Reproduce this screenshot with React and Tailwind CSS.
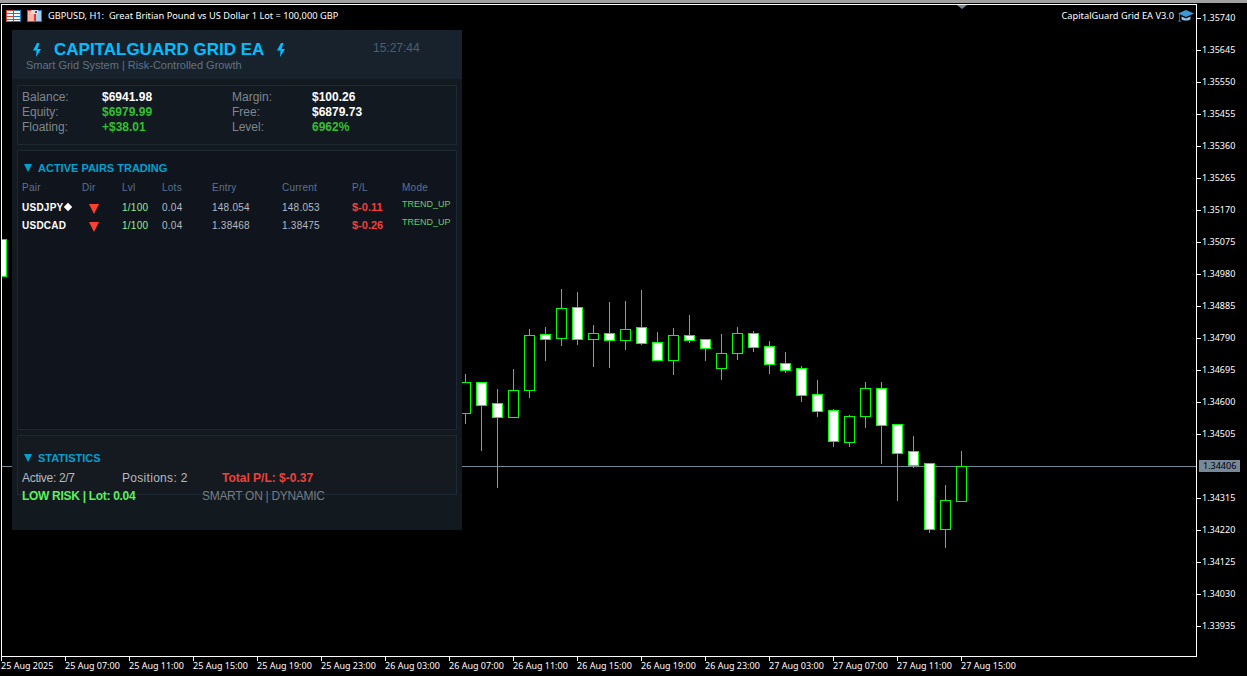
import React from "react";

const candles = [
  [465, 374, 424, 382, 413, 0], [481, 382, 451, 382, 405, 1], [497, 389, 488, 403, 417, 1], [513, 369, 418, 390, 417, 0],
  [529, 329, 398, 335, 390, 0], [545, 327, 361, 334, 339, 1], [561, 289, 346, 308, 338, 0], [577, 292, 345, 307, 339, 1],
  [593, 325, 367, 333, 339, 0], [609, 302, 368, 333, 340, 1], [625, 301, 350, 329, 340, 0], [641, 290, 345, 327, 343, 1],
  [657, 332, 360, 342, 360, 1], [673, 328, 375, 335, 360, 0], [689, 315, 343, 335, 340, 1], [705, 339, 361, 339, 348, 1],
  [721, 334, 380, 353, 368, 0], [737, 327, 360, 333, 353, 0], [753, 331, 352, 333, 347, 1], [769, 341, 374, 346, 364, 1],
  [785, 352, 373, 363, 370, 1], [801, 366, 402, 368, 395, 1], [817, 380, 417, 394, 411, 1], [833, 409, 447, 410, 441, 1],
  [849, 415, 447, 416, 442, 0], [865, 382, 428, 388, 416, 0], [881, 382, 464, 388, 425, 1], [897, 424, 501, 424, 453, 1],
  [913, 436, 468, 451, 465, 1], [929, 463, 533, 463, 529, 1], [945, 485, 548, 500, 529, 0], [961, 451, 501, 466, 501, 0],
];

const prices = [
  "1.35740", "1.35645", "1.35550", "1.35455", "1.35360", "1.35265", "1.35170", "1.35075", "1.34980", "1.34885",
  "1.34790", "1.34695", "1.34600", "1.34505", "1.34406", "1.34315", "1.34220", "1.34125", "1.34030", "1.33935",
];

const times = [
  "25 Aug 2025", "25 Aug 07:00", "25 Aug 11:00", "25 Aug 15:00", "25 Aug 19:00", "25 Aug 23:00", "26 Aug 03:00", "26 Aug 07:00",
  "26 Aug 11:00", "26 Aug 15:00", "26 Aug 19:00", "26 Aug 23:00", "27 Aug 03:00", "27 Aug 07:00", "27 Aug 11:00", "27 Aug 15:00",
];

const pairs = [
  { name: "USDJPY", mark: true, entry: "148.054", current: "148.053", pl: "$-0.11" },
  { name: "USDCAD", mark: false, entry: "1.38468", current: "1.38475", pl: "$-0.26" },
];

function Chart() {
  return (
    <svg className="absolute inset-0 h-full w-full" viewBox="2 5 1194 651" shapeRendering="crispEdges">
      <rect x="-3.5" y="239.5" width="10" height="37" fill="#fff" stroke="#00ff00" />
      <line x1="0" x2="1196" y1="466.5" y2="466.5" stroke="#778899" />
      {candles.map(([x, high, low, top, bottom, filled]) => (
        <g key={x}>
          <line x1={x + 0.5} x2={x + 0.5} y1={high} y2={low} stroke="#00ff00" />
          <rect x={x - 4.5} y={top + 0.5} width="10" height={bottom - top} fill={filled ? "#fff" : "#000"} stroke="#00ff00" />
        </g>
      ))}
    </svg>
  );
}

function Bolt() {
  return (
    <svg className="h-3.5 w-2.5" viewBox="0 0 10 14" fill="#00bfff">
      <path d="M5 0 1 7.500h3.500L4 14l5-8H5.500L7.500 0z" />
    </svg>
  );
}

function Down({ className }) {
  return (
    <svg className={className} viewBox="0 0 10 10" fill="currentColor" preserveAspectRatio="none">
      <path d="M0 0h10L5 10z" />
    </svg>
  );
}

function TableIcon() {
  return (
    <svg className="h-3 w-[15px]" viewBox="0 0 15 12" shapeRendering="crispEdges">
      <rect x="0.500" y="0.500" width="14" height="11" fill="#fff" stroke="#e0402c" />
      <path d="M7.500 0.500h7v11h-7z" fill="#fff" stroke="#1e78c8" />
      <path d="M1 3.500h6M1 6.500h6M1 9.500h6" stroke="#e0402c" />
      <path d="M8 3.500h6M8 6.500h6M8 9.500h6" stroke="#1e78c8" />
    </svg>
  );
}

function DiskIcon() {
  return (
    <svg className="h-3 w-[15px]" viewBox="0 0 15 12" shapeRendering="crispEdges">
      <path d="M0.500 0.500h6.500v11h-6.500z" fill="#ffb4a8" stroke="#e0402c" />
      <path d="M8 0.500h6.500v11h-6.500z" fill="#a8d0f0" stroke="#1e78c8" />
      <rect x="4" y="0" width="7" height="4" fill="#ddd" />
      <rect x="8" y="1" width="2" height="2" fill="#555" />
    </svg>
  );
}

function CapIcon() {
  return (
    <svg className="h-3.5 w-4" viewBox="0 0 16 14" fill="#3d9ad8">
      <path d="M8 1 0 4.500 8 8l8-3.500z" />
      <path d="M3.500 7.500v2.800C5 12 11 12 12.500 10.300V7.500L8 9.500z" fill="#8cc4ec" />
      <path d="M1 5h1v6H1zM0.500 11h2v2h-2z" fill="#1e6fb0" />
    </svg>
  );
}

function Panel() {
  return (
    <div className="absolute left-2.5 top-[25px] h-[500px] w-[450px] bg-[#12191f] font-['Liberation_Sans',sans-serif]">
      <div className="relative border-b border-[#18222c] bg-[#18222c] pl-3.5 pb-1.5 pt-3">
        <div className="flex h-4 items-center gap-3 pl-1.5">
          <Bolt />
          <span className="text-[17px] font-bold leading-4 text-[#00bfff]">CAPITALGUARD GRID EA</span>
          <Bolt />
        </div>
        <p className="text-[11px] leading-3.5 text-[#5f7282]">Smart Grid System | Risk-Controlled Growth</p>
        <span className="absolute left-[361px] top-2.5 text-xs leading-4 text-[#4d5f6e]">15:27:44</span>
      </div>

      <div className="flex flex-col gap-[5px] px-[5px] pt-1.5">
        <div className="grid h-15 grid-cols-[5rem_130px_5rem_1fr] content-start border border-[#1d2833] bg-[#121920] px-1 pt-1 text-xs leading-tight text-[#7e8790]">
          <span>Balance:</span>
          <span className="font-bold text-white">$6941.98</span>
          <span>Margin:</span>
          <span className="font-bold text-white">$100.26</span>
          <span>Equity:</span>
          <span className="font-bold text-[#32c032]">$6979.99</span>
          <span>Free:</span>
          <span className="font-bold text-white">$6879.73</span>
          <span>Floating:</span>
          <span className="font-bold text-[#32c032]">+$38.01</span>
          <span>Level:</span>
          <span className="font-bold text-[#32c032]">6962%</span>
        </div>

        <div className="h-70 border border-[#1d2833] bg-[#10151d] px-1 pt-2">
          <div className="flex h-4.5 items-center gap-1.5 text-[11px] font-bold text-[#00a0d0]">
            <Down className="ml-0.5 h-2 w-2" />
            ACTIVE PAIRS TRADING
          </div>
          <div className="mt-0.5 grid h-4 grid-cols-[60px_40px_40px_50px_70px_70px_50px_1fr] items-center text-[10px] tracking-wide text-[#5b7290]">
            <span>Pair</span>
            <span>Dir</span>
            <span>Lvl</span>
            <span>Lots</span>
            <span>Entry</span>
            <span>Current</span>
            <span>P/L</span>
            <span>Mode</span>
          </div>
          <div className="mt-0.75">
            {pairs.map((p) => (
              <div key={p.name} className="grid h-4.5 grid-cols-[60px_40px_40px_50px_70px_70px_50px_1fr] items-center text-[10px] tracking-wide text-[#b4bac0]">
                <span className="flex items-center gap-px font-bold text-white">
                  {p.name}
                  {p.mark && <span className="size-1.5 rotate-45 bg-white" />}
                </span>
                <Down className="ml-[7px] mt-1 h-2.5 w-2.5 text-[#ff4030]" />
                <span className="text-[#90ee90]">1/100</span>
                <span>0.04</span>
                <span>{p.entry}</span>
                <span>{p.current}</span>
                <span className="text-[11px] font-bold tracking-normal text-[#f04038]">{p.pl}</span>
                <span className="-mt-1 text-[9px] tracking-normal text-[#66cc66]">TREND_UP</span>
              </div>
            ))}
          </div>
        </div>

        <div className="h-15 border border-[#1d2833] bg-[#141a20] px-1 pt-3.5">
          <div className="flex h-4 items-center gap-1.5 text-[11px] font-bold text-[#00a0d0]">
            <Down className="ml-0.5 h-2 w-2" />
            STATISTICS
          </div>
          <div className="mt-1 grid h-4 grid-cols-[100px_100px_1fr] items-center text-xs text-[#b4bac0]">
            <span className="tracking-tight">Active: 2/7</span>
            <span className="tracking-wide">Positions: 2</span>
            <span className="font-bold text-[#f04038]">Total P/L: $-0.37</span>
          </div>
          <div className="mt-0.5 grid h-4 grid-cols-[180px_1fr] items-center text-xs tracking-tight">
            <span className="font-bold text-[#5cf05c]">LOW RISK | Lot: 0.04</span>
            <span className="text-[#777c82]">SMART ON | DYNAMIC</span>
          </div>
        </div>
      </div>
    </div>
  );
}

export default function App() {
  return (
    <div className="flex h-screen w-screen flex-col overflow-hidden bg-black font-['Noto_Sans',sans-serif] text-[9px] text-white">
      <div className="relative z-10 h-1 bg-black">
        <div className="h-[3px] bg-[#a0a0a0]" />
      </div>

      <div className="flex pl-px">
        <div className="relative h-[653px] w-[1196px] border border-white">
          <Chart />
          <div className="relative flex justify-between pl-1 pr-0.5 pt-1 text-[9.25px]">
            <div className="flex items-center gap-1.5">
              <TableIcon />
              <DiskIcon />
              <span>GBPUSD, H1:&nbsp; Great Britian Pound vs US Dollar 1 Lot = 100,000 GBP</span>
            </div>
            <div className="flex items-center gap-1">
              <span>CapitalGuard Grid EA V3.0</span>
              <CapIcon />
            </div>
          </div>
          <Down className="absolute left-[955px] top-0 h-1 w-2.5 text-[#778899]" />
          <Panel />
        </div>

        <div className="-mt-1 flex-1 pt-0.5 leading-3">
          {prices.map((price) =>
            price === "1.34406" ? (
              <div key={price} className="flex h-8 items-center">
                <span className="ml-0.5 h-3 bg-[#778899] px-1 text-black">{price}</span>
              </div>
            ) : (
              <div key={price} className="flex h-8 items-center gap-px">
                <span className="h-px w-1 bg-white" />
                <span>{price}</span>
              </div>
            )
          )}
        </div>
      </div>

      <div className="flex pl-px">
        {times.map((t) => (
          <div key={t} className="w-16">
            <div className="h-1 w-px bg-white" />
            <div className="whitespace-nowrap leading-2.5">{t}</div>
          </div>
        ))}
      </div>
    </div>
  );
}
